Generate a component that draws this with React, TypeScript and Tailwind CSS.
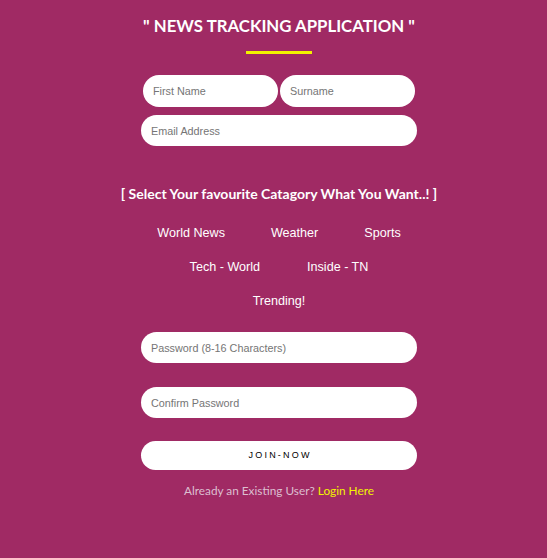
import React from "react";

const inputCls =
  "block h-[31px] rounded-full bg-white border-0 outline-none px-[10px] text-[10.8px] text-[#333] placeholder:text-[#757575] font-['Liberation_Sans',Arial,sans-serif]";

export default function App() {
  return (
    <div className="min-h-[558px] w-full bg-[#a02a64] flex flex-col items-center pl-[11px]">
      <h1 className="mt-[14px] text-white font-bold text-[16.8px] leading-[24px] font-['Lato',sans-serif]">
        " NEWS TRACKING APPLICATION "
      </h1>
      <div className="mt-[13px] w-[66px] h-[3px] bg-[#f2f200]" />
      <div className="mt-[21px] flex gap-[2px]">
        <input className={inputCls + " w-[135px] h-[32px]"} placeholder="First Name" />
        <input className={inputCls + " w-[135px] h-[32px]"} placeholder="Surname" />
      </div>
      <input className={inputCls + " mt-[8px] w-[276px]"} placeholder="Email Address" />
      <div className="mt-[38px] text-white font-bold text-[14px] leading-[20px] font-['Lato',sans-serif]">
        [ Select Your favourite Catagory What You Want..! ]
      </div>
      <div className="mt-[21px] flex flex-col items-center gap-[18px] text-white text-[12.6px] leading-[16px] font-['Liberation_Sans',Arial,sans-serif]">
        <div className="flex gap-[46px]">
          <span>World News</span>
          <span>Weather</span>
          <span>Sports</span>
        </div>
        <div className="flex gap-[47px]">
          <span>Tech - World</span>
          <span>Inside - TN</span>
        </div>
        <div className="flex">
          <span>Trending!</span>
        </div>
      </div>
      <input className={inputCls + " mt-[23px] w-[276px]"} placeholder="Password (8-16 Characters)" />
      <input className={inputCls + " mt-[24px] w-[276px]"} placeholder="Confirm Password" />
      <button className="mt-[23px] w-[276px] h-[29px] rounded-full bg-white text-black text-[9px] tracking-[2.2px] font-['Liberation_Sans',Arial,sans-serif] flex items-center justify-center">
        <span className="mr-[-2.2px]">JOIN-NOW</span>
      </button>
      <div className="mt-[12px] text-[11.8px] leading-[18px] font-['Lato',sans-serif] text-[#dcbfd0]">
        Already an Existing User? <span className="text-[#f2f200]">Login Here</span>
      </div>
    </div>
  );
}
